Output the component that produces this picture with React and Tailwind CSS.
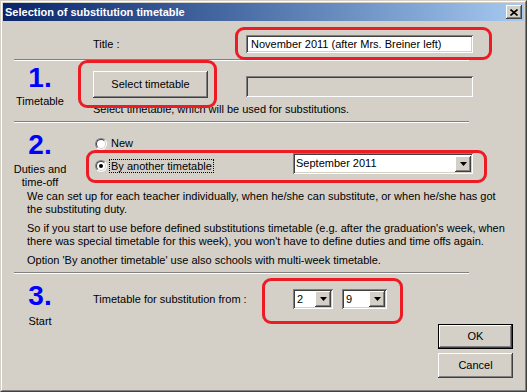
import React from "react";

const raised =
  "bg-[#d4d0c8] shadow-[inset_-1px_-1px_0_#404040,inset_1px_1px_0_#ffffff,inset_-2px_-2px_0_#808080,inset_2px_2px_0_#d4d0c8]";
const sunken =
  "shadow-[inset_1px_1px_0_#808080,inset_-1px_-1px_0_#ffffff,inset_2px_2px_0_#404040,inset_-2px_-2px_0_#d4d0c8]";

function Separator() {
  return <div className="ml-[11px] w-[455px] h-[2px] border-t border-t-[#808080] border-b border-b-white shrink-0" />;
}

function ArrowButton() {
  return (
    <div className={`w-[16px] h-[16px] flex items-center justify-center ${raised}`}>
      <svg width="7" height="4" viewBox="0 0 7 4">
        <polygon points="0,0 7,0 3.5,4" fill="#000" />
      </svg>
    </div>
  );
}

function Combo({ value, width }) {
  return (
    <div className={`bg-white h-[20px] flex items-center justify-between pl-[4px] pr-[2px] ${sunken} ${width}`}>
      <span className="leading-[13px]">{value}</span>
      <ArrowButton />
    </div>
  );
}

function Radio({ checked }) {
  return (
    <span className="w-[12px] h-[12px] rounded-full bg-white border border-t-[#808080] border-l-[#808080] border-r-white border-b-white flex items-center justify-center shrink-0">
      <span className="w-[10px] h-[10px] rounded-full border border-t-[#404040] border-l-[#404040] border-r-[#d4d0c8] border-b-[#d4d0c8] flex items-center justify-center">
        {checked && <span className="w-[4px] h-[4px] rounded-full bg-black" />}
      </span>
    </span>
  );
}

function Mark({ className }) {
  return <div className={`absolute border-[3px] border-[#ed1c24] rounded-[9px] pointer-events-none ${className}`} />;
}

function BigNumber({ n, className }) {
  return (
    <div className={`text-[28px] leading-[28px] font-bold text-[#0000ff] ${className}`}>{n}</div>
  );
}

export default function App() {
  return (
    <div className="w-[527px] h-[392px] bg-[#d4d0c8] border border-t-[#d4d0c8] border-l-[#d4d0c8] border-r-[#404040] border-b-[#404040] text-[11px] text-black font-['Liberation_Sans',Arial,sans-serif]">
      <div className="h-full border border-t-white border-l-white border-r-[#808080] border-b-[#808080] p-px flex flex-col">
        {/* title bar */}
        <div className="h-[18px] shrink-0 flex items-center justify-between bg-gradient-to-r from-[#0a246a] to-[#a6caf0] pl-[2px] pr-[2px]">
          <span className="text-white font-bold text-[11px] leading-[13px]">Selection of substitution timetable</span>
          <div className={`w-[16px] h-[14px] flex items-center justify-center ${raised}`}>
            <svg width="8" height="7" viewBox="0 0 8 7">
              <path d="M0.5 0.5 L7.5 6.5 M7.5 0.5 L0.5 6.5" stroke="#000" strokeWidth="1.6" />
            </svg>
          </div>
        </div>

        <div className="flex-1 relative flex flex-col">
          {/* title row */}
          <div className="h-[38px] shrink-0 flex items-start pt-[14px]">
            <span className="ml-[90px] w-[153px] leading-[18px]">Title :</span>
            <div className={`w-[227px] h-[18px] bg-white pl-[5px] flex items-center ${sunken}`}>
              <span className="leading-[13px]">November 2011 (after Mrs. Breiner left)</span>
            </div>
          </div>
          <Separator />

          {/* section 1 */}
          <div className="h-[60px] shrink-0 flex">
            <div className="w-[74px] flex flex-col items-center">
              <BigNumber n="1." className="mt-[3px]" />
              <div className="mt-[3px] leading-[13px]">Timetable</div>
            </div>
            <div className="ml-[16px] pt-[10px] flex flex-col">
              <div className="flex items-start">
                <div className={`w-[115px] h-[27px] flex items-center justify-center ${raised}`}>Select timetable</div>
                <div className={`ml-[38px] mt-[5px] w-[227px] h-[21px] bg-[#d4d0c8] ${sunken}`} />
              </div>
              <div className="mt-[5px] leading-[13px]">Select timetable, which will be used for substitutions.</div>
            </div>
          </div>
          <Separator />

          {/* section 2 */}
          <div className="h-[149px] shrink-0 flex flex-col">
            <div className="flex">
              <div className="w-[74px] flex flex-col items-center">
                <BigNumber n="2." className="mt-[8px]" />
                <div className="mt-[4px] leading-[13px] text-center">
                  Duties and
                  <br />
                  time-off
                </div>
              </div>
              <div className="ml-[18px] flex flex-col">
                <div className="mt-[14px] h-[13px] flex items-center">
                  <Radio />
                  <span className="ml-[4px] leading-[13px]">New</span>
                </div>
                <div className="mt-[3px] flex items-start">
                  <div className="w-[198px] mt-[6px] flex items-center">
                    <Radio checked />
                    <span className="ml-[2px] pl-px pr-px border border-dotted border-black leading-[12px]">By another timetable</span>
                  </div>
                  <div className={`w-[180px] h-[21px] bg-white flex items-center justify-between pl-[3px] pr-[2px] ${sunken}`}>
                    <span className="leading-[13px]">September 2011</span>
                    <ArrowButton />
                  </div>
                </div>
              </div>
            </div>
            <div className="ml-[24px] mt-[1px] leading-[13px] whitespace-nowrap">
              <p>
                We can set up for each teacher individually, when he/she can substitute, or when he/she has got
                <br />
                the substituting duty.
              </p>
              <p className="mt-[6px]">
                So if you start to use before defined substitutions timetable (e.g. after the graduation's week, when
                <br />
                there was special timetable for this week), you won't have to define duties and time offs again.
              </p>
              <p className="mt-[6px]">Option 'By another timetable' use also schools with multi-week timetable.</p>
            </div>
          </div>
          <Separator />

          {/* section 3 */}
          <div className="flex-1 flex">
            <div className="w-[74px] flex flex-col items-center">
              <BigNumber n="3." className="mt-[8px]" />
              <div className="mt-[5px] leading-[13px]">Start</div>
            </div>
            <div className="ml-[16px] mt-[15px] h-[20px] flex items-center">
              <span className="w-[200px] leading-[13px]">Timetable for substitution from :</span>
              <Combo value="2" width="w-[40px]" />
              <Combo value="9" width="w-[45px] ml-[9px]" />
            </div>
            <div className="ml-auto mr-[11px] pt-[50px] flex flex-col">
              <div className="w-[75px] h-[25px] border border-black">
                <div className={`w-full h-full flex items-center justify-center ${raised}`}>OK</div>
              </div>
              <div className={`mt-[4px] w-[75px] h-[25px] flex items-center justify-center ${raised}`}>Cancel</div>
            </div>
          </div>

          {/* red annotation marks */}
          <Mark className="left-[232px] top-[6px] w-[257px] h-[33px]" />
          <Mark className="left-[75px] top-[39px] w-[139px] h-[48px]" />
          <Mark className="left-[83px] top-[129px] w-[401px] h-[33px]" />
          <Mark className="left-[259px] top-[257px] w-[141px] h-[46px]" />
        </div>
      </div>
    </div>
  );
}
